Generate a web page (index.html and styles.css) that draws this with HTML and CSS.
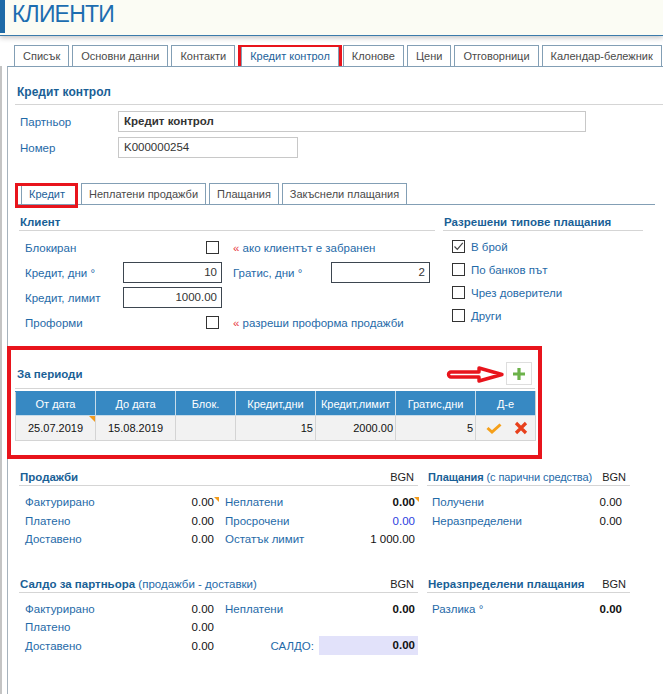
FILE: index.html
```html
<!DOCTYPE html>
<html lang="bg">
<head>
<meta charset="utf-8">
<title>Клиенти</title>
<link rel="stylesheet" href="styles.css">
</head>
<body>
<header class="hdr"><h1 class="hdr-title">КЛИЕНТИ</h1></header>

<nav class="tabs">
  <span class="tab">Списък</span>
  <span class="tab">Основни данни</span>
  <span class="tab">Контакти</span>
  <span class="tab tab-active">Кредит контрол</span>
  <span class="tab">Клонове</span>
  <span class="tab">Цени</span>
  <span class="tab">Отговорници</span>
  <span class="tab">Календар-бележник</span>
  <span class="tab tab-more"></span>
</nav>

<div class="content">
  <div class="panel">
    <h2 class="sec sec-top">Кредит контрол</h2>
    <div class="frow"><span class="flbl">Партньор</span><span class="inp inp-partner">Кредит контрол</span></div>
    <div class="frow"><span class="flbl">Номер</span><span class="inp inp-num">K000000254</span></div>

    <nav class="subtabs">
      <span class="stab stab-active">Кредит</span>
      <span class="stab">Неплатени продажби</span>
      <span class="stab">Плащания</span>
      <span class="stab">Закъснели плащания</span>
    </nav>

    <div class="credit">
      <section class="client">
        <h3 class="sec">Клиент</h3>
        <div class="cgrid">
          <span class="lbl">Блокиран</span><span class="cb cb-end"></span><span class="hint"><span class="raq">«</span> ако клиентът е забранен</span>
          <span class="lbl">Кредит, дни °</span><span class="numinp">10</span><span class="lbl lbl2">Гратис, дни °</span><span class="numinp">2</span>
          <span class="lbl">Кредит, лимит</span><span class="numinp">1000.00</span><span></span><span></span>
          <span class="lbl">Проформи</span><span class="cb cb-end"></span><span class="hint"><span class="raq">«</span> разреши проформа продажби</span>
        </div>
      </section>
      <section class="paytypes">
        <h3 class="sec">Разрешени типове плащания</h3>
        <ul class="checks">
          <li class="chk"><span class="cb"><svg width="11" height="11" viewBox="0 0 11 11"><path d="M1.5 5.5 L4.3 8.3 L9.8 1.8" fill="none" stroke="#444" stroke-width="1.2"/></svg></span>В брой</li>
          <li class="chk"><span class="cb"></span>По банков път</li>
          <li class="chk"><span class="cb"></span>Чрез доверители</li>
          <li class="chk"><span class="cb"></span>Други</li>
        </ul>
      </section>
    </div>

    <section class="periods">
      <div class="per-head">
        <h3 class="per-title">За периоди</h3>
        <svg class="arrow" width="60" height="19" viewBox="0 0 60 19"><path d="M5 7 L33 7 L33 3 L56 9.5 L33 16 L33 12 L5 12 A2.5 2.5 0 0 1 5 7 Z" fill="#fff" stroke="#e8141c" stroke-width="3.4" stroke-linejoin="round"/></svg>
        <span class="addbtn"><svg width="14" height="14" viewBox="0 0 14 14"><path d="M7 1 V13 M1 7 H13" stroke="#6cb24a" stroke-width="3.2"/></svg></span>
      </div>
      <table class="ptable">
        <colgroup><col class="w80"><col class="w80"><col class="w60"><col class="w80"><col class="w80"><col class="w80"><col class="w60"></colgroup>
        <thead>
          <tr><th>От дата</th><th>До дата</th><th>Блок.</th><th>Кредит,дни</th><th>Кредит,лимит</th><th>Гратис,дни</th><th>Д-е</th></tr>
        </thead>
        <tbody>
          <tr>
            <td class="ctr flagc">25.07.2019</td>
            <td class="ctr">15.08.2019</td>
            <td></td>
            <td class="rt">15</td>
            <td class="rt">2000.00</td>
            <td class="rt">5</td>
            <td class="acts"><svg width="16" height="11" viewBox="0 0 16 11"><path d="M1.5 5 L6 9 L14.5 1.5" fill="none" stroke="#f5a01a" stroke-width="3"/></svg><svg class="xico" width="14" height="14" viewBox="0 0 14 14"><path d="M2 2 L12 12 M12 2 L2 12" stroke="#e8401c" stroke-width="3.2"/></svg></td>
          </tr>
        </tbody>
      </table>
    </section>

    <div class="summary">
      <section class="sblock">
        <h3 class="sec sec-row"><span>Продажби</span><span class="cur">BGN</span></h3>
        <div class="sgrid">
          <span class="lbl">Фактурирано</span><span class="val flag">0.00</span><span class="lbl lbl2">Неплатени</span><span class="val val2 strong flag">0.00</span>
          <span class="lbl">Платено</span><span class="val">0.00</span><span class="lbl lbl2">Просрочени</span><span class="val val2 link">0.00</span>
          <span class="lbl">Доставено</span><span class="val">0.00</span><span class="lbl lbl2">Остатък лимит</span><span class="val val2">1 000.00</span>
        </div>
      </section>
      <section class="sblock sblock-r">
        <h3 class="sec sec-row sec-sm"><span>Плащания <span class="thin">(с парични средства)</span></span><span class="cur">BGN</span></h3>
        <div class="rgrid">
          <span class="lbl">Получени</span><span class="val">0.00</span>
          <span class="lbl">Неразпределени</span><span class="val">0.00</span>
        </div>
      </section>
      <section class="sblock">
        <h3 class="sec sec-row"><span>Салдо за партньора <span class="thin">(продажби - доставки)</span></span><span class="cur">BGN</span></h3>
        <div class="sgrid">
          <span class="lbl">Фактурирано</span><span class="val">0.00</span><span class="lbl lbl2">Неплатени</span><span class="val val2 strong">0.00</span>
          <span class="lbl">Платено</span><span class="val">0.00</span><span></span><span></span>
          <span class="lbl">Доставено</span><span class="val">0.00</span><span class="saldo"><span class="saldo-lbl">САЛДО:</span><span class="saldo-box">0.00</span></span>
        </div>
      </section>
      <section class="sblock sblock-r">
        <h3 class="sec sec-row"><span>Неразпределени плащания</span><span class="cur">BGN</span></h3>
        <div class="rgrid">
          <span class="lbl">Разлика °</span><span class="val strong">0.00</span>
        </div>
      </section>
    </div>
  </div>
</div>
</body>
</html>
```

FILE: styles.css
```css
* { box-sizing: border-box; }
html, body { margin: 0; padding: 0; }
body {
  width: 663px;
  height: 694px;
  overflow: hidden;
  background: #fff;
  font-family: "Liberation Sans", Arial, sans-serif;
  font-size: 11.5px;
  color: #222;
}

/* header */
.hdr {
  height: 36px;
  background: #fbfcf4;
  border-bottom: 1px solid #3b7bab;
  box-shadow: 0 2px 5px rgba(0, 0, 0, 0.22);
  position: relative;
  z-index: 1;
}
.hdr-title {
  margin: 0;
  height: 33px;
  border-left: 5px solid #1e6aa6;
  padding-left: 7px;
  font-size: 23px;
  line-height: 28px;
  font-weight: normal;
  letter-spacing: -0.8px;
  color: #1c6db0;
}

/* top tabs */
.tabs {
  display: flex;
  margin: 9px 0 0 14px;
  white-space: nowrap;
  overflow: hidden;
}
.tab {
  flex-shrink: 0;
  height: 21px;
  line-height: 20px;
  padding: 0 8px;
  margin-right: 3px;
  border: 1px solid #839fb5;
  border-bottom: none;
  color: #4a4a4a;
  font-size: 11px;
  background: #fff;
}
.tab-more { width: 20px; }
.tab-active {
  color: #1b5f9a;
  position: relative;
  margin-left: 3px;
  margin-right: 4px;
}
.tab-active::after {
  content: "";
  position: absolute;
  left: -4px;
  right: -4px;
  top: -2px;
  bottom: -4px;
  border: 3px solid #e8141c;
}

/* content panel */
.content {
  border-left: 2px solid #c4c4c4;
  padding-left: 5px;
}
.panel {
  border-left: 1px solid #a6b2bc;
  border-top: 1px solid #839fb5;
  padding-left: 7px;
  height: 628px;
}

.sec {
  margin: 0;
  font-size: 11.5px;
  font-weight: bold;
  color: #1a5f96;
  line-height: 14px;
  padding: 0 0 1px 1px;
  border-bottom: 1px solid #d5d5d5;
  white-space: nowrap;
}
.sec-top {
  font-size: 12px;
  margin-top: 18px;
  padding: 0 0 5px 2px;
}

.frow {
  display: flex;
  align-items: center;
  margin-top: 5px;
}
.sec-top + .frow { margin-top: 6px; }
.flbl {
  width: 103px;
  padding-left: 5px;
  color: #1f6aa8;
}
.inp {
  height: 21px;
  line-height: 19px;
  border: 1px solid #c8c8c8;
  padding-left: 5px;
  color: #333;
}
.inp-partner { width: 468px; font-weight: bold; }
.inp-num { width: 180px; }

/* sub tabs */
.subtabs {
  display: flex;
  margin: 25px 8px 0 0;
  padding-left: 6px;
  border-bottom: 1px solid #839fb5;
  white-space: nowrap;
}
.stab {
  height: 21px;
  line-height: 20px;
  padding: 0 7px;
  margin-right: 3px;
  border: 1px solid #839fb5;
  border-bottom: none;
  color: #4a4a4a;
  font-size: 11px;
}
.stab-active {
  color: #1b5f9a;
  position: relative;
  padding: 0 12px 0 7px;
}
.stab-active::after {
  content: "";
  position: absolute;
  left: -7px;
  right: -1px;
  top: -1px;
  bottom: -4px;
  border: 3px solid #e8141c;
}

/* credit area */
.credit {
  display: flex;
  gap: 8px;
  margin-left: 4px;
  margin-top: 10px;
}
.client { width: 416px; }
.paytypes { width: 200px; }

.lbl { color: #1f6aa8; white-space: nowrap; }
.lbl2 { padding-left: 11px; }

.cgrid {
  display: grid;
  grid-template-columns: 98px 99px 109px 99px;
  grid-auto-rows: 25px;
  align-items: center;
  padding-left: 6px;
  margin-top: 4px;
}
.cb {
  display: inline-flex;
  align-items: center;
  justify-content: center;
  width: 13px;
  height: 13px;
  border: 1px solid #333;
  background: #fff;
  flex-shrink: 0;
}
.cb-end { justify-self: end; margin-right: 3px; }
.hint {
  grid-column: 3 / 5;
  padding-left: 11px;
  color: #1f6aa8;
}
.raq { color: #e8383d; }
.numinp {
  height: 21px;
  line-height: 19px;
  border: 1px solid #3d4650;
  text-align: right;
  padding-right: 4px;
  color: #333;
}

.checks {
  list-style: none;
  margin: 4px 0 0;
  padding: 0 0 0 9px;
}
.chk {
  display: flex;
  align-items: center;
  height: 23px;
  color: #1f6aa8;
}
.chk .cb { margin-right: 6px; }

/* periods */
.periods {
  margin: 11px 0 0 -8px;
  width: 535px;
  border: 4px solid #e8141c;
  padding: 0 3px 14px 4px;
}
.per-head {
  display: flex;
  align-items: flex-end;
  height: 39px;
  border-bottom: 1px solid #d5d5d5;
}
.per-title {
  flex: 1;
  margin: 0;
  font-size: 11.5px;
  font-weight: bold;
  color: #1a5f96;
  line-height: 14px;
  padding: 0 0 7px 2px;
}
.arrow { margin-bottom: 4px; }
.addbtn {
  display: flex;
  align-items: center;
  justify-content: center;
  width: 26px;
  height: 23px;
  border: 1px solid #dedede;
  margin: 0 3px 3px 0;
  background: #fff;
}
.ptable {
  margin-top: 2px;
  width: 520px;
  border-collapse: collapse;
  table-layout: fixed;
  font-size: 11px;
}
.w80 { width: 80px; }
.w60 { width: 60px; }
.ptable th {
  height: 24px;
  background: #3789c3;
  color: #fff;
  font-weight: normal;
  border: 1px solid #c7dcea;
  border-top-color: #3789c3;
  padding: 0;
}
.ptable th:first-child { border-left-color: #d0d0d0; }
.ptable th:last-child { border-right-color: #d0d0d0; }
.ptable td {
  height: 25px;
  background: #f2f2f2;
  border: 1px solid #d4d4d4;
  color: #111;
  padding: 0 2px;
}
.ctr { text-align: center; }
.rt { text-align: right; }
.flagc { position: relative; }
.flagc::after {
  content: "";
  position: absolute;
  top: 0;
  right: 0;
  border-top: 6px solid #f29b1d;
  border-left: 6px solid transparent;
}
.ptable td.acts { padding: 0 0 0 10px; }
.acts svg { vertical-align: middle; }
.xico { margin-left: 12px; }

/* summary */
.summary {
  display: grid;
  grid-template-columns: 399px 203px;
  column-gap: 9px;
  row-gap: 28px;
  margin: 11px 0 0 4px;
  align-items: start;
}
.sec-row {
  display: flex;
  justify-content: space-between;
  padding-right: 4px;
}
.sec-sm { font-size: 11px; letter-spacing: -0.1px; }
.thin { font-weight: normal; color: #1f6aa8; }
.cur { font-weight: normal; color: #222; font-size: 11px; letter-spacing: 0; }
.sgrid {
  display: grid;
  grid-template-columns: 139px 50px 130px 74px;
  grid-auto-rows: 18.5px;
  align-items: center;
  padding-left: 6px;
  margin-top: 7px;
}
.rgrid {
  display: grid;
  grid-template-columns: 1fr auto;
  grid-auto-rows: 18.5px;
  align-items: center;
  padding: 0 8px 0 5px;
  margin-top: 7px;
}
.val { text-align: right; color: #111; }
.val2 { padding-right: 3px; }
.strong { font-weight: bold; }
.link { color: #2b3de0; }
.flag { position: relative; }
.flag::after {
  content: "";
  position: absolute;
  top: 1px;
  right: -5px;
  border-top: 5px solid #f29b1d;
  border-left: 5px solid transparent;
}
.val2.flag::after { right: -1px; }
.saldo {
  grid-column: 3 / 5;
  display: flex;
  align-items: center;
  justify-content: flex-end;
  height: 18.5px;
}
.saldo-lbl { color: #1f6aa8; margin-right: 5px; }
.saldo-box {
  width: 99px;
  height: 19px;
  line-height: 19px;
  background: #e2e2fa;
  text-align: right;
  padding-right: 3px;
  font-weight: bold;
  color: #111;
}
```
